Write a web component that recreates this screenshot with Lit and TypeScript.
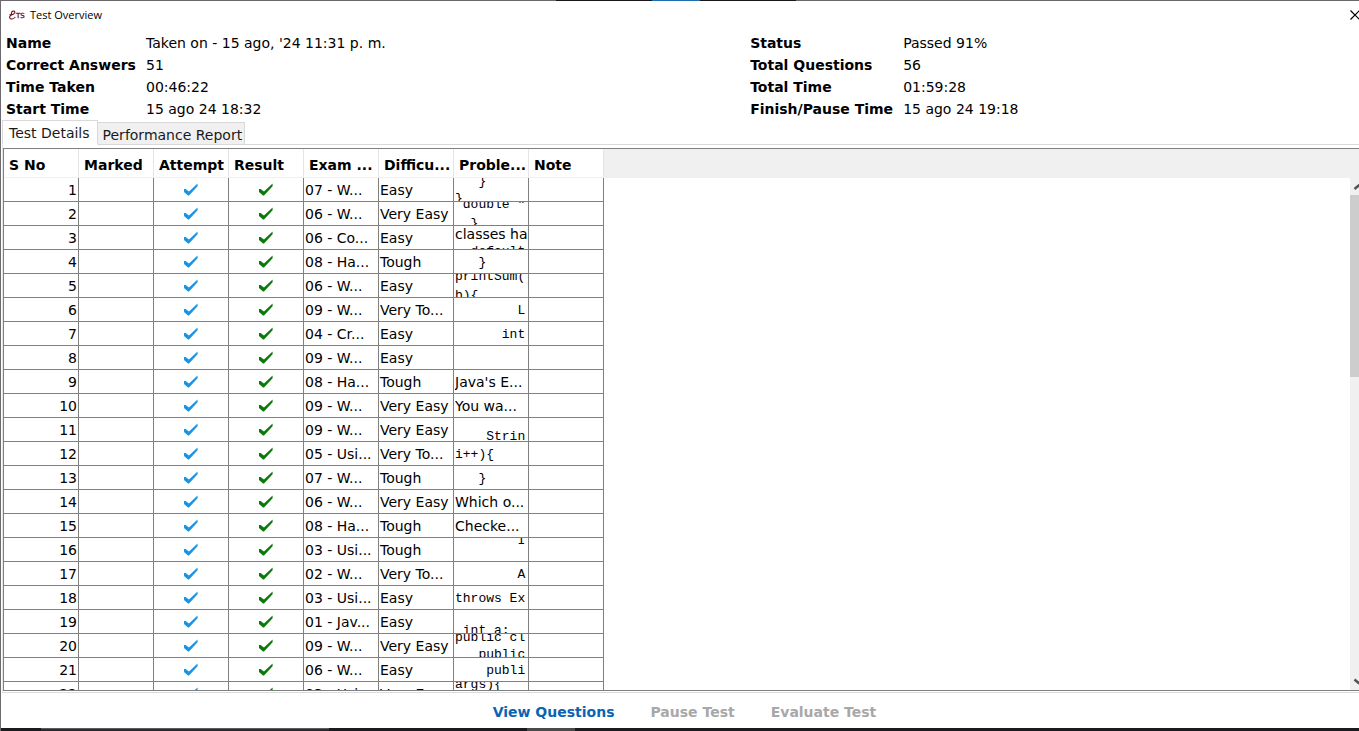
import { LitElement, html, css, svg } from "lit";
import { customElement, state } from "lit/decorators.js";
import { classMap } from "lit/directives/class-map.js";

type Spacing = "tight" | "normal" | "loose";
type Preview = { kind: "text" | "code" | "mixed"; spacing: Spacing; lines: string[] };
type Row = { exam: string; level: string; problem: Preview };

const code = (lines: string[], spacing: Spacing = "normal"): Preview => ({ kind: "code", spacing, lines });
const text = (line: string): Preview => ({ kind: "text", spacing: "normal", lines: [line] });

const ROWS: Row[] = [
  { exam: "07 - W...", level: "Easy", problem: code(["   }", "}"]) },
  { exam: "06 - W...", level: "Very Easy", problem: code([' double "', "  }"], "loose") },
  { exam: "06 - Co...", level: "Easy", problem: { kind: "mixed", spacing: "normal", lines: ["classes ha", "  default"] } },
  { exam: "08 - Ha...", level: "Tough", problem: code(["   }"]) },
  { exam: "06 - W...", level: "Easy", problem: code(["printSum(", "b){"], "loose") },
  { exam: "09 - W...", level: "Very To...", problem: code(["        L"]) },
  { exam: "04 - Cr...", level: "Easy", problem: code(["      int"]) },
  { exam: "09 - W...", level: "Easy", problem: text("") },
  { exam: "08 - Ha...", level: "Tough", problem: text("Java's E...") },
  { exam: "09 - W...", level: "Very Easy", problem: text("You wa...") },
  { exam: "09 - W...", level: "Very Easy", problem: code([" ", "    Strin"], "tight") },
  { exam: "05 - Usi...", level: "Very To...", problem: code(["i++){"]) },
  { exam: "07 - W...", level: "Tough", problem: code(["   }"]) },
  { exam: "06 - W...", level: "Very Easy", problem: text("Which o...") },
  { exam: "08 - Ha...", level: "Tough", problem: text("Checke...") },
  { exam: "03 - Usi...", level: "Tough", problem: code(["        I", " "], "loose") },
  { exam: "02 - W...", level: "Very To...", problem: code(["        A"]) },
  { exam: "03 - Usi...", level: "Easy", problem: code(["throws Ex"]) },
  { exam: "01 - Jav...", level: "Easy", problem: code([" ", " int a;"]) },
  { exam: "09 - W...", level: "Very Easy", problem: code(["public cl", "   public"]) },
  { exam: "06 - W...", level: "Easy", problem: code(["    publi"]) },
  { exam: "03 - Usi...", level: "Very Easy", problem: code(["args){", " "], "loose") },
];

const COLUMNS = ["S No", "Marked", "Attempt", "Result", "Exam ...", "Difficu...", "Proble...", "Note"];

const tick = (label: string) => svg`
  <svg class="tick" viewBox="0 0 14 13" role="img" aria-label=${label}>
    <polygon points="0,6 1.6,6 5,8.6 13.6,0.4 13.6,3.2 5,12.4 4,12.4 0,9" fill="currentColor"></polygon>
  </svg>`;

@customElement("results-table")
export class ResultsTable extends LitElement {
  static styles = css`
    :host { display: flex; flex-direction: column; min-height: 0; border-top: 1px solid #808080; border-left: 1px solid #808080; border-bottom: 1px solid #808080; background: #fff; }
    * { box-sizing: border-box; }
    .body { flex: 1; min-height: 0; display: flex; background: linear-gradient(#f0f0f0, #f0f0f0) top / 100% 29px no-repeat; }
    .scroll { flex: 1; min-width: 0; overflow: hidden; }
    .bar { flex: none; width: 9px; margin-top: 29px; background: #f0f0f0; display: flex; flex-direction: column; overflow: hidden; }
    .arrow { flex: none; width: 17px; height: 17px; display: block; }
    .track { flex: 1; }
    .thumb { height: 38%; background: #cdcdcd; }
    table { table-layout: fixed; width: 600px; border-collapse: separate; border-spacing: 0; }
    th { height: 29px; padding: 3px 0 0 5px; text-align: left; font-weight: bold; white-space: nowrap; overflow: hidden; background: #fff; border-right: 1px solid #e5e5e5; border-bottom: 1px solid #f0f0f0; }
    td { height: 24px; padding: 0 1px; white-space: nowrap; overflow: hidden; border-right: 1px solid #808080; border-bottom: 1px solid #808080; }
    .no { text-align: right; }
    .mark { padding: 0 0 1px 0; color: #1b94e6; }
    .mark.ok { color: #0a780a; }
    .tick { display: block; width: 14px; height: 13px; margin: 0 auto; }
    .preview { height: 23px; padding-top: 1px; display: flex; flex-direction: column; justify-content: center; overflow: hidden; }
    .preview.mixed { padding: 0; justify-content: flex-start; }
    .line { flex: none; height: 17px; line-height: 17px; white-space: pre; }
    .tight .line { height: 14px; line-height: 14px; }
    .loose .line { height: 19px; line-height: 19px; }
    .code .line, .mixed .line + .line { font-family: "Liberation Mono", monospace; font-size: 13px; }
  `;

  private preview(p: Preview) {
    return html`<div class=${classMap({ preview: true, [p.kind]: true, [p.spacing]: true })}>${p.lines.map((l) => html`<div class="line">${l}</div>`)}</div>`;
  }

  render() {
    return html`
      <div class="body">
        <div class="scroll">
          <table>
            <thead><tr>${COLUMNS.map((c) => html`<th scope="col">${c}</th>`)}</tr></thead>
            <tbody>
              ${ROWS.map((r, i) => html`<tr>
                <td class="no">${i + 1}</td>
                <td></td>
                <td class="mark">${tick("Attempted")}</td>
                <td class="mark ok">${tick("Correct")}</td>
                <td>${r.exam}</td>
                <td>${r.level}</td>
                <td>${this.preview(r.problem)}</td>
                <td></td>
              </tr>`)}
            </tbody>
          </table>
        </div>
        <div class="bar">
          <svg class="arrow" viewBox="0 0 17 17"><path d="M4.5 11 8.5 7.5 12.5 11" fill="none" stroke="#505050" stroke-width="2.4"></path></svg>
          <div class="track"><div class="thumb"></div></div>
          <svg class="arrow" viewBox="0 0 17 17"><path d="M4.5 6.5 8.5 10 12.5 6.5" fill="none" stroke="#505050" stroke-width="2.4"></path></svg>
        </div>
      </div>`;
  }
}

@customElement("app-root")
export class AppRoot extends LitElement {
  @state() private tab = 0;

  static styles = css`
    :host { display: block; height: 100vh; color: #000; font: 14px/20px "DejaVu Sans", sans-serif; }
    * { box-sizing: border-box; }
    .window { height: 100%; display: flex; flex-direction: column; overflow: hidden; background: #fff; border-left: 1px solid #6b6b6f; }
    .edge { flex: none; height: 1px; padding-right: 8px; background: #6b686c; display: flex; justify-content: center; }
    .strip { width: 240px; background: #17171b; display: flex; justify-content: center; }
    .accent { width: 48px; background: #1f6fb0; }
    .title { flex: none; height: 31px; padding: 0 0 3px 8px; display: flex; align-items: center; gap: 5px; font: 11px/16px "Open Sans", sans-serif; }
    .logo { width: 16px; height: 10px; display: flex; align-items: flex-end; color: #6e1018; font: 7px/7px "DejaVu Sans", sans-serif; -webkit-text-stroke: 0.3px #6e1018; }
    .logo svg { flex: none; width: 7px; height: 10px; }
    .title h1 { flex: 1; margin: 0; font: inherit; }
    .close { width: 9px; height: 28px; padding: 0; border: 0; background: none; overflow: hidden; display: flex; align-items: center; }
    .close svg { flex: none; width: 10px; height: 10px; }
    .info { flex: none; padding-left: 5px; display: grid; grid-template-columns: 55% 1fr; }
    dl { margin: 0; display: grid; grid-template-columns: 140px 1fr; grid-auto-rows: 22px; line-height: 22px; white-space: nowrap; }
    .wide { grid-template-columns: 153px 1fr; }
    dt { font-weight: bold; }
    dd { margin: 0; }
    .tabs { flex: none; height: 25px; padding-left: 1px; display: flex; align-items: flex-end; }
    .tab { height: 23px; padding: 2px 2px 0 5px; border: 1px solid #d9d9d9; border-left: 0; background: #f0f0f0; font: inherit; color: #1a1a1a; white-space: nowrap; }
    .tab.on { height: 25px; padding: 0 7px 0 6px; border-left: 1px solid #d9d9d9; border-bottom-color: #fff; background: #fff; }
    .fill { flex: 1; height: 1px; background: #d9d9d9; }
    .panel { flex: 1; min-height: 0; margin-left: 1px; padding: 3px 0 1px 0; display: flex; flex-direction: column; border-left: 1px solid #e5e5e5; border-bottom: 1px solid #dcdcdc; }
    results-table { flex: 1; }
    .actions { flex: none; height: 35px; display: flex; justify-content: center; align-items: center; gap: 36px; padding: 3px 0 0 9px; }
    .actions button { padding: 0; border: 0; background: none; font: bold 14px/20px "DejaVu Sans", sans-serif; color: #0a64b4; }
    .actions button:disabled { color: #a8a8a8; }
    .desk { flex: none; height: 3px; background: #1b1b1d; display: flex; }
    .desk i { width: 288px; margin-left: 40px; border-top: 1px solid #5c5c5e; background: #2b2b2d; }
    .desk b { width: 48px; margin-left: 198px; background: #4a4a4a; }
  `;

  render() {
    const tabs = ["Test Details", "Performance Report"];
    return html`
      <main class="window">
        <div class="edge"><div class="strip"><div class="accent"></div></div></div>
        <header class="title">
          <span class="logo">
            <svg viewBox="0 0 7 10"><path d="M0.6 4.6C3 5.2 6.2 3.8 5.8 1.8 5.2 0.2 2.8 1.2 2.4 3 2.2 4.2 3 4.8 3.6 4.8 1.6 5 0.2 6.4 0.8 8 1.6 9.8 4.6 9 6.4 7" fill="none" stroke="currentColor" stroke-width="1.1"></path></svg>TS
          </span>
          <h1>Test Overview</h1>
          <button class="close" aria-label="Close"><svg viewBox="0 0 10 10"><path d="M0.5 0.5 9.5 9.5M9.5 0.5 0.5 9.5" stroke="#000" stroke-width="1.2"></path></svg></button>
        </header>
        <section class="info">
          <dl>
            <dt>Name</dt><dd>Taken on - 15 ago, '24 11:31 p. m.</dd>
            <dt>Correct Answers</dt><dd>51</dd>
            <dt>Time Taken</dt><dd>00:46:22</dd>
            <dt>Start Time</dt><dd>15 ago 24 18:32</dd>
          </dl>
          <dl class="wide">
            <dt>Status</dt><dd>Passed 91%</dd>
            <dt>Total Questions</dt><dd>56</dd>
            <dt>Total Time</dt><dd>01:59:28</dd>
            <dt>Finish/Pause Time</dt><dd>15 ago 24 19:18</dd>
          </dl>
        </section>
        <nav class="tabs" role="tablist">
          ${tabs.map((t, i) => html`<button role="tab" class=${classMap({ tab: true, on: i === this.tab })} aria-selected=${i === this.tab} @click=${() => (this.tab = i)}>${t}</button>`)}
          <span class="fill"></span>
        </nav>
        <section class="panel"><results-table></results-table></section>
        <footer class="actions">
          <button>View Questions</button>
          <button disabled>Pause Test</button>
          <button disabled>Evaluate Test</button>
        </footer>
        <div class="desk"><i></i><b></b></div>
      </main>`;
  }
}
